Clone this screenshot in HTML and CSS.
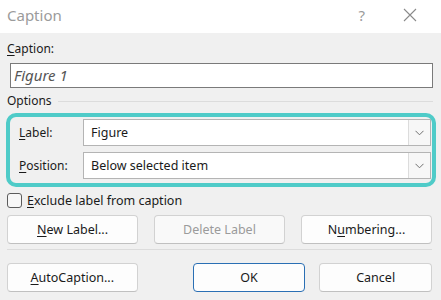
FILE: index.html
```html
<!DOCTYPE html>
<html>
<head>
<meta charset="utf-8">
<link rel="stylesheet" href="styles.css">
</head>
<body>
<div class="dialog">
  <div class="titlebar">
    <span class="title">Caption</span>
    <span class="help">?</span>
    <span class="close"><svg width="14" height="14" viewBox="0 0 14 14"><path d="M1 1L13 13M13 1L1 13" stroke="#8a8a8a" stroke-width="1.1" fill="none"/></svg></span>
  </div>
  <div class="body">
    <div class="lbl cap-lbl"><u>C</u>aption:</div>
    <div class="textbox">Figure 1</div>
    <div class="group-head"><span>Options</span><span class="rule"></span></div>
    <div class="highlight">
      <div class="row">
        <span class="row-lbl"><u>L</u>abel:</span>
        <div class="combo"><span class="combo-text">Figure</span><span class="combo-btn"><svg width="9" height="6" viewBox="0 0 9 6"><path d="M0.5 0.8L4.5 4.8L8.5 0.8" stroke="#707070" stroke-width="1" fill="none"/></svg></span></div>
      </div>
      <div class="row">
        <span class="row-lbl"><u>P</u>osition:</span>
        <div class="combo"><span class="combo-text">Below selected item</span><span class="combo-btn"><svg width="9" height="6" viewBox="0 0 9 6"><path d="M0.5 0.8L4.5 4.8L8.5 0.8" stroke="#707070" stroke-width="1" fill="none"/></svg></span></div>
      </div>
    </div>
    <div class="check-row"><span class="checkbox"></span><span><u>E</u>xclude label from caption</span></div>
    <div class="btn-row">
      <span class="btn"><u>N</u>ew Label...</span>
      <span class="btn disabled">Delete Label</span>
      <span class="btn">N<u>u</u>mbering...</span>
    </div>
    <div class="separator"></div>
    <div class="btn-row bottom">
      <span class="btn"><u>A</u>utoCaption...</span>
      <span class="btn ok">OK</span>
      <span class="btn cancel">Cancel</span>
    </div>
  </div>
</div>
</body>
</html>
```
FILE: styles.css
```css
* { box-sizing: border-box; }
html, body { margin: 0; padding: 0; }
body {
  width: 441px;
  height: 300px;
  background: #f0f0f0;
  font-family: "Noto Sans", "Open Sans", sans-serif;
  font-size: 12px;
  color: #1a1a1a;
  overflow: hidden;
}
u { text-decoration-thickness: 1px; text-underline-offset: 2px; }
.titlebar {
  height: 33px;
  background: #fff;
  display: flex;
  align-items: center;
  padding: 0 0 3px 7px;
}
.title { font-size: 15px; color: #9b9b9b; flex: 1; }
.help { font-size: 15px; color: #9b9b9b; margin-right: 38px; }
.close { width: 14px; height: 14px; margin-right: 24px; display: flex; }
.body { padding: 0 8px 0 7px; }
.cap-lbl { margin-top: 7px; height: 18px; line-height: 18px; }
.textbox {
  margin: 5px 0 0 3px;
  width: 423px;
  height: 25px;
  background: #fff;
  border: 1px solid #7a7a7a;
  font-style: italic;
  font-size: 15px;
  color: #555;
  padding-left: 3px;
  line-height: 22px;
}
.group-head {
  display: flex;
  align-items: center;
  margin-top: 4px;
  height: 17px;
  gap: 6px;
}
.rule { flex: 1; height: 1px; background: #dcdcdc; margin-top: 1px; }
.highlight {
  margin: 4px -3px 0 -1px;
  border: 4px solid #4fcbc8;
  border-radius: 10px;
  padding: 2px 1px 4px 9px;
  display: flex;
  flex-direction: column;
  gap: 6px;
}
.row { display: flex; align-items: center; }
.row-lbl { width: 64px; }
.combo {
  flex: 1;
  height: 27px;
  background: #fff;
  border: 1px solid #b4b4b4;
  display: flex;
  align-items: stretch;
}
.combo-text { flex: 1; padding-left: 7px; line-height: 25px; font-size: 12.5px; }
.combo-btn {
  width: 22px;
  border-left: 1px solid #dcdcdc;
  background: #f7f7f7;
  display: flex;
  align-items: center;
  justify-content: center;
}
.check-row {
  display: flex;
  align-items: center;
  gap: 5px;
  margin-top: 6px;
  height: 15px;
  font-size: 12.5px;
}
.checkbox {
  width: 15px;
  height: 15px;
  border: 1px solid #5c5c5c;
  border-radius: 3px;
  background: #f7f7f7;
}
.btn-row {
  display: flex;
  justify-content: space-between;
  margin-top: 7px;
  padding-right: 1px;
}
.btn {
  width: 131px;
  height: 29px;
  background: #fdfdfd;
  border: 1px solid #d2d2d2;
  border-bottom-color: #c0c0c0;
  border-radius: 4px;
  display: flex;
  align-items: center;
  justify-content: center;
  font-size: 12.5px;
}
.btn.disabled { color: #9b9b9b; background: #f9f9f9; }
.separator { height: 1px; background: #dcdcdc; margin: 5px 1px 0 0; }
.btn-row.bottom { margin-top: 13px; justify-content: flex-start; }
.btn.ok { width: 113px; margin-left: 55px; border: 1px solid #2a6fb4; }
.btn.cancel { width: 113px; margin-left: 14px; }
```
